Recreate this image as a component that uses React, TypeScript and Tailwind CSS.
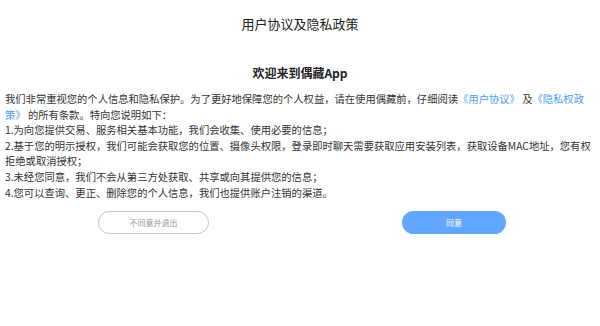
export default function App() {
  const font = { fontFamily: '"Noto Sans CJK SC", "Noto Sans", sans-serif' };
  return (
    <div className="w-[600px] h-[326px] bg-white text-[#333]" style={font}>
      <div className="pt-4 text-center text-[13px] leading-[16px] text-[#222]">用户协议及隐私政策</div>
      <div className="mt-[33px] text-center text-[12px] leading-[16px] font-bold text-[#222]">欢迎来到偶藏App</div>
      <div className="mt-[10px] pl-[5px] pr-[2px] text-[10.3px] leading-[15.6px] text-[#333]">
        <p>
          我们非常重视您的个人信息和隐私保护。为了更好地保障您的个人权益，请在使用偶藏前，仔细阅读
          <span className="text-[#4b9ef7]">《用户协议》</span> 及 
          <span className="text-[#4b9ef7]">《隐私权政<br />策》</span> 的所有条款。特向您说明如下：
        </p>
        <p>1.为向您提供交易、服务相关基本功能，我们会收集、使用必要的信息；</p>
        <p>2.基于您的明示授权，我们可能会获取您的位置、摄像头权限，登录即时聊天需要获取应用安装列表，获取设备MAC地址，您有权<br />拒绝或取消授权；</p>
        <p>3.未经您同意，我们不会从第三方处获取、共享或向其提供您的信息；</p>
        <p>4.您可以查询、更正、删除您的个人信息，我们也提供账户注销的渠道。</p>
      </div>
      <div className="mt-[11px] flex pl-[98px]">
        <button className="w-[111px] h-[23px] rounded-full border border-[#c4c4c4] bg-white text-[8px] text-[#999] flex items-center justify-center">
          不同意并退出
        </button>
        <button className="ml-[193px] w-[104px] h-[23px] rounded-full bg-[#62a7ff] text-[8px] text-white flex items-center justify-center">
          同意
        </button>
      </div>
    </div>
  );
}
